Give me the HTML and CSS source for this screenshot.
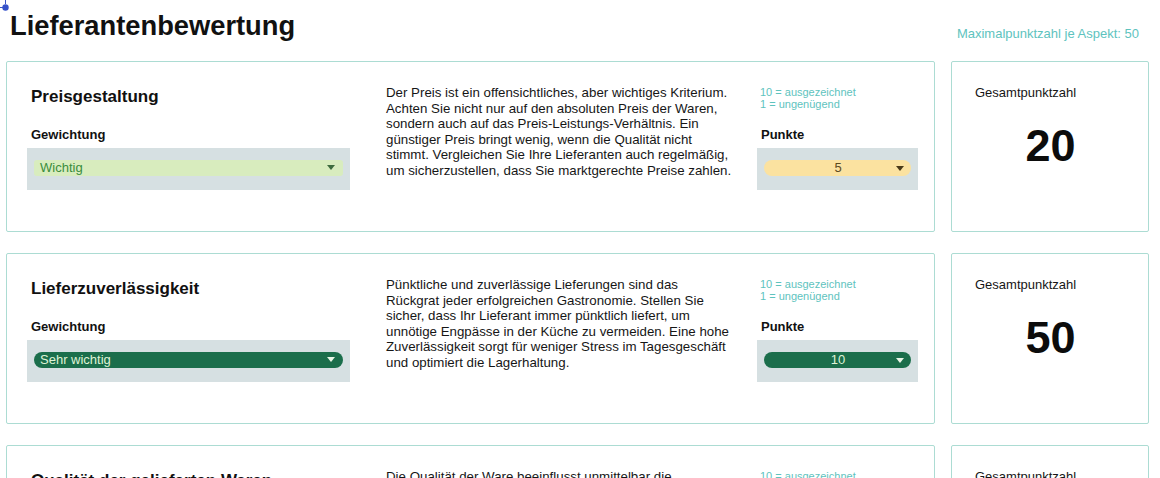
FILE: index.html
```html
<!DOCTYPE html>
<html lang="de">
<head>
<meta charset="utf-8">
<title>Lieferantenbewertung</title>
<link rel="stylesheet" href="styles.css">
</head>
<body>
<svg class="pin" width="12" height="12" viewBox="0 0 12 12"><path d="M0 7.5H3M5.5 0V4" stroke="#3a55c8" stroke-width="1"/><circle cx="5.5" cy="7.5" r="3.2" fill="#3652c9"/></svg>
<div class="page">
  <header class="header">
    <h1 class="title">Lieferantenbewertung</h1>
    <div class="max">Maximalpunktzahl je Aspekt: 50</div>
  </header>

  <section class="row">
    <div class="card">
      <div class="col-left">
        <h2 class="aspect">Preisgestaltung</h2>
        <div class="label">Gewichtung</div>
        <div class="select-wrap">
          <div class="select select-light">
            <span class="select-text">Wichtig</span>
            <svg class="arrow" width="8" height="5" viewBox="0 0 8 5"><path d="M0 0H8L4 5Z"/></svg>
          </div>
        </div>
      </div>
      <p class="desc">Der Preis ist ein offensichtliches, aber wichtiges Kriterium.<br>Achten Sie nicht nur auf den absoluten Preis der Waren,<br>sondern auch auf das Preis-Leistungs-Verhältnis. Ein<br>günstiger Preis bringt wenig, wenn die Qualität nicht<br>stimmt. Vergleichen Sie Ihre Lieferanten auch regelmäßig,<br>um sicherzustellen, dass Sie marktgerechte Preise zahlen.</p>
      <div class="col-points">
        <div class="hint">10 = ausgezeichnet<br>1 = ungenügend</div>
        <div class="label">Punkte</div>
        <div class="select-wrap">
          <div class="select select-yellow points">
            <span class="select-text">5</span>
            <svg class="arrow" width="8" height="5" viewBox="0 0 8 5"><path d="M0 0H8L4 5Z"/></svg>
          </div>
        </div>
      </div>
    </div>
    <div class="total">
      <div class="total-label">Gesamtpunktzahl</div>
      <div class="total-value">20</div>
    </div>
  </section>

  <section class="row">
    <div class="card">
      <div class="col-left">
        <h2 class="aspect">Lieferzuverlässigkeit</h2>
        <div class="label">Gewichtung</div>
        <div class="select-wrap">
          <div class="select select-dark">
            <span class="select-text">Sehr wichtig</span>
            <svg class="arrow" width="8" height="5" viewBox="0 0 8 5"><path d="M0 0H8L4 5Z"/></svg>
          </div>
        </div>
      </div>
      <p class="desc">Pünktliche und zuverlässige Lieferungen sind das<br>Rückgrat jeder erfolgreichen Gastronomie. Stellen Sie<br>sicher, dass Ihr Lieferant immer pünktlich liefert, um<br>unnötige Engpässe in der Küche zu vermeiden. Eine hohe<br>Zuverlässigkeit sorgt für weniger Stress im Tagesgeschäft<br>und optimiert die Lagerhaltung.</p>
      <div class="col-points">
        <div class="hint">10 = ausgezeichnet<br>1 = ungenügend</div>
        <div class="label">Punkte</div>
        <div class="select-wrap">
          <div class="select select-dark points">
            <span class="select-text">10</span>
            <svg class="arrow" width="8" height="5" viewBox="0 0 8 5"><path d="M0 0H8L4 5Z"/></svg>
          </div>
        </div>
      </div>
    </div>
    <div class="total">
      <div class="total-label">Gesamtpunktzahl</div>
      <div class="total-value">50</div>
    </div>
  </section>

  <section class="row">
    <div class="card">
      <div class="col-left">
        <h2 class="aspect">Qualität der gelieferten Waren</h2>
        <div class="label">Gewichtung</div>
        <div class="select-wrap">
          <div class="select select-dark">
            <span class="select-text">Sehr wichtig</span>
            <svg class="arrow" width="8" height="5" viewBox="0 0 8 5"><path d="M0 0H8L4 5Z"/></svg>
          </div>
        </div>
      </div>
      <p class="desc">Die Qualität der Ware beeinflusst unmittelbar die<br>Qualität Ihrer Gerichte. Achten Sie auf Frische, Geschmack und Haltbarkeit der Produkte. Gute Lieferanten liefern gleichbleibende Qualität und nehmen Reklamationen ernst.</p>
      <div class="col-points">
        <div class="hint">10 = ausgezeichnet<br>1 = ungenügend</div>
        <div class="label">Punkte</div>
        <div class="select-wrap">
          <div class="select select-yellow points">
            <span class="select-text">6</span>
            <svg class="arrow" width="8" height="5" viewBox="0 0 8 5"><path d="M0 0H8L4 5Z"/></svg>
          </div>
        </div>
      </div>
    </div>
    <div class="total">
      <div class="total-label">Gesamtpunktzahl</div>
      <div class="total-value">30</div>
    </div>
  </section>
</div>
</body>
</html>
```

FILE: styles.css
```css
* { box-sizing: border-box; }

html, body {
  margin: 0;
  padding: 0;
  background: #ffffff;
}

body {
  font-family: "Liberation Sans", Arial, Helvetica, sans-serif;
  color: #111111;
}

.pin {
  position: absolute;
  left: 0;
  top: 0;
}

.page {
  padding: 0 11px 0 6px;
}

.header {
  display: flex;
  justify-content: space-between;
  align-items: flex-end;
  padding: 9px 10px 0 4px;
  margin-bottom: 18px;
}

.title {
  margin: 0;
  font-size: 27.3px;
  line-height: 34px;
  font-weight: 700;
  color: #111111;
}

.max {
  font-size: 13px;
  line-height: 15px;
  color: #5ec3be;
  margin-bottom: 2px;
}

.row {
  display: flex;
  gap: 16px;
  margin-bottom: 21px;
}

.card {
  flex: 1;
  height: 171px;
  border: 1px solid #acdcd3;
  border-radius: 2px;
  display: grid;
  grid-template-columns: 323px minmax(0, 1fr) 161px;
  align-items: start;
  padding: 23px 16px 0 20px;
}

.col-left {
  padding-top: 1.5px;
}

.aspect {
  margin: 0 0 20px 4px;
  font-size: 17px;
  line-height: 20px;
  font-weight: 700;
}

.label {
  font-size: 13px;
  line-height: 16px;
  font-weight: 700;
  margin: 0 0 5px 4px;
}

.select-wrap {
  background: #d6e0e2;
  height: 42px;
  padding: 12px 7px 0 7px;
}

.select {
  height: 16px;
  display: flex;
  align-items: center;
  justify-content: space-between;
  padding: 0 8px 0 6px;
  border-radius: 8px;
  font-size: 13px;
  line-height: 16px;
}

.select.points {
  padding: 0 7px 0 0;
}

.select.points .select-text {
  flex: 1;
  text-align: center;
  padding-left: 16px;
}

.select-light {
  background: #d8ecbe;
  color: #3a8c3c;
  border-radius: 3px;
}
.select-light .arrow { fill: #3d6b3d; }

.select-yellow {
  background: #fbe2a0;
  color: #5b4a20;
}
.select-yellow .arrow { fill: #4a3a18; }

.select-dark {
  background: #1b6e4b;
  color: #dff3d6;
}
.select-dark .arrow { fill: #e8f5e6; }

.arrow {
  flex: none;
  display: block;
}

.desc {
  margin: 0;
  padding: 0 14px 0 36px;
  font-size: 13.3px;
  line-height: 15.6px;
  color: #161616;
}

.hint {
  font-size: 11px;
  line-height: 12px;
  color: #5ec3be;
  margin: 1px 0 17px 3px;
}

.total {
  width: 198px;
  height: 171px;
  border: 1px solid #acdcd3;
  border-radius: 2px;
  padding: 23px 12px 0 23px;
}

.total-label {
  font-size: 13px;
  line-height: 16px;
  color: #161616;
}

.total-value {
  margin-top: 22px;
  font-size: 45px;
  line-height: 45px;
  font-weight: 700;
  text-align: center;
  padding-right: 10px;
  color: #0c0c0c;
}
```
